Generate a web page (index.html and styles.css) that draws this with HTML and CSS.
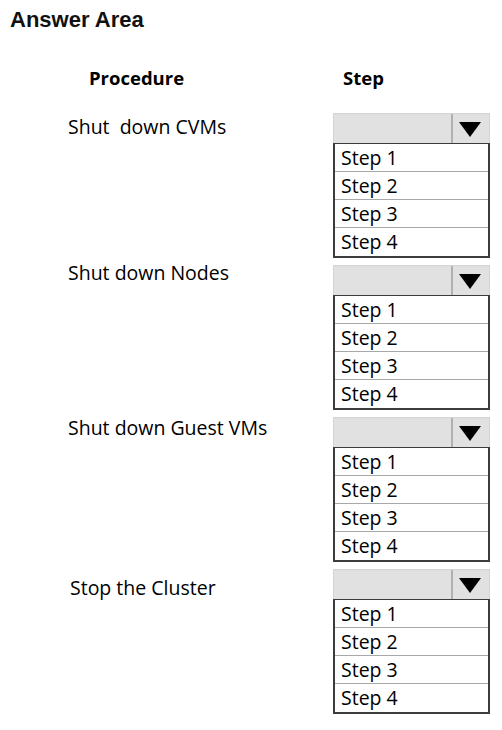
FILE: index.html
```html
<!DOCTYPE html>
<html lang="en">
<head>
  <meta charset="UTF-8" />
  <title>Answer Area</title>
  <link rel="stylesheet" href="styles.css">
</head>
<body>

<h2 class="title">Answer Area</h2>

<div class="answer">
  <div class="col-head procedure-head">Procedure</div>
  <div class="col-head">Step</div>

  <div class="label">Shut&nbsp; down CVMs</div>
  <div class="dropdown">
    <div class="select"><span class="arrow"></span></div>
    <ul class="options">
      <li>Step 1</li>
      <li>Step 2</li>
      <li>Step 3</li>
      <li>Step 4</li>
    </ul>
  </div>

  <div class="label up">Shut down Nodes</div>
  <div class="dropdown">
    <div class="select"><span class="arrow"></span></div>
    <ul class="options">
      <li>Step 1</li>
      <li>Step 2</li>
      <li>Step 3</li>
      <li>Step 4</li>
    </ul>
  </div>

  <div class="label mid">Shut down Guest VMs</div>
  <div class="dropdown">
    <div class="select"><span class="arrow"></span></div>
    <ul class="options">
      <li>Step 1</li>
      <li>Step 2</li>
      <li>Step 3</li>
      <li>Step 4</li>
    </ul>
  </div>

  <div class="label down">Stop the Cluster</div>
  <div class="dropdown">
    <div class="select"><span class="arrow"></span></div>
    <ul class="options">
      <li>Step 1</li>
      <li>Step 2</li>
      <li>Step 3</li>
      <li>Step 4</li>
    </ul>
  </div>
</div>

</body>
</html>
```

FILE: styles.css
```css
body {
  margin: 0;
  background: white;
  color: #000;
  font-family: "Open Sans", "Noto Sans", sans-serif;
}

.title {
  margin: 0;
  padding: 8px 0 0 10px;
  font-family: "Liberation Sans", Arial, sans-serif;
  font-size: 22px;
  line-height: 24px;
  font-weight: bold;
  color: #111;
}

.answer {
  display: grid;
  grid-template-columns: 333px 157px;
  row-gap: 7px;
  margin-top: 34px;
}

.col-head {
  font-size: 18.5px;
  font-weight: bold;
  line-height: 24px;
  padding-left: 10px;
  margin-bottom: 16px;
}

.procedure-head {
  padding-left: 89px;
}

.label {
  font-size: 19.5px;
  line-height: 28px;
  padding-left: 68px;
}

.label.up {
  margin-top: -6px;
}

.label.mid {
  margin-top: -3px;
}

.label.down {
  margin-top: 5px;
  padding-left: 70px;
}

.dropdown {
  width: 157px;
}

.select {
  height: 30px;
  background: #e1e1e1;
  border: 1px solid #d4d4d4;
  border-bottom: none;
  box-sizing: border-box;
  display: flex;
  justify-content: flex-end;
}

.arrow {
  width: 36px;
  border-left: 2px solid #b0b0b0;
  position: relative;
}

.arrow::after {
  content: "";
  position: absolute;
  left: 6px;
  top: 8px;
  border-left: 11.5px solid transparent;
  border-right: 11.5px solid transparent;
  border-top: 15px solid #000;
}

.options {
  list-style: none;
  margin: 0;
  padding: 0;
  border: 2px solid #3c3c3c;
  border-top-width: 1px;
}

.options li {
  font-size: 19.5px;
  height: 27px;
  line-height: 27px;
  padding-left: 6px;
  border-bottom: 1px solid #a8a8a8;
}

.options li:last-child {
  border-bottom: none;
  height: 28px;
}
```
